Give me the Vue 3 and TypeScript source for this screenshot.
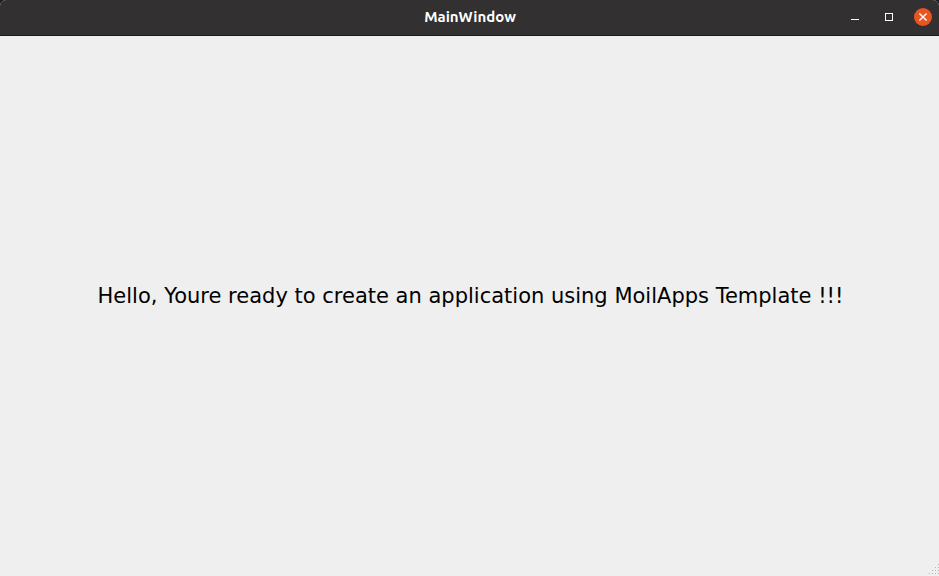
<script setup lang="ts">
const title: string = 'MainWindow'
const message: string = 'Hello, Youre ready to create an application using MoilApps Template !!!'

interface Dot {
  x: number
  y: number
}

// Triangular dot pattern of the resize grip, one more dot per row.
const gripDots: Dot[] = []
for (let row = 0; row < 4; row++) {
  for (let col = 3 - row; col < 4; col++) {
    gripDots.push({ x: 1 + col * 3, y: row * 3 })
  }
}
</script>

<template>
  <div class="window">
    <header class="titlebar">
      <h1 class="title">{{ title }}</h1>
      <div class="controls">
        <button class="control" type="button" aria-label="Minimize">
          <svg width="18" height="18" viewBox="0 0 18 18" aria-hidden="true">
            <rect x="5" y="11" width="8" height="1" fill="#fff" />
          </svg>
        </button>
        <button class="control" type="button" aria-label="Maximize">
          <svg width="18" height="18" viewBox="0 0 18 18" aria-hidden="true">
            <rect x="5.5" y="5.5" width="7" height="7" fill="none" stroke="#fff" />
          </svg>
        </button>
        <button class="control close" type="button" aria-label="Close">
          <svg width="18" height="18" viewBox="0 0 18 18" aria-hidden="true">
            <path d="M5.4 5.4 L12.6 12.6 M12.6 5.4 L5.4 12.6" stroke="#fff" stroke-width="1.4" fill="none" />
          </svg>
        </button>
      </div>
    </header>
    <main class="content">
      <p class="message">{{ message }}</p>
    </main>
    <footer class="statusbar">
      <svg class="grip" width="11" height="12" viewBox="0 0 11 12" aria-hidden="true">
        <rect v-for="dot in gripDots" :key="`${dot.x}-${dot.y}`" :x="dot.x" :y="dot.y" width="1" height="1" />
      </svg>
    </footer>
  </div>
</template>

<style>
body {
  background: #1c1b1b;
}
</style>

<style scoped>
.window {
  display: flex;
  flex-direction: column;
  min-height: 100vh;
  overflow: hidden;
  border-radius: 6px 6px 0 0;
  background: #efefef;
}

.titlebar {
  display: grid;
  grid-template-columns: 1fr auto 1fr;
  align-items: center;
  box-sizing: border-box;
  height: 36px;
  padding: 0 7px 1px 8px;
  border-bottom: 1px solid #1b1a1a;
  background: #323030;
}

.title {
  grid-column: 2;
  margin: 0;
  color: #ffffff;
  font: bold 15px/20px Ubuntu, "Noto Sans", sans-serif;
}

.controls {
  display: flex;
  justify-content: flex-end;
  gap: 16px;
}

.control {
  width: 18px;
  height: 18px;
  padding: 0;
  border: 0;
  border-radius: 50%;
  background: transparent;
}

.control svg {
  display: block;
}

.close {
  background: #e95420;
}

.content {
  display: flex;
  flex: 1;
  align-items: center;
  justify-content: center;
  padding: 1px 0 0 2px;
}

.message {
  margin: 0;
  color: #000000;
  text-align: center;
  font: 21px/26px "DejaVu Sans", sans-serif;
}

.statusbar {
  display: flex;
  align-items: flex-start;
  justify-content: flex-end;
  height: 22px;
  padding-top: 10px;
  box-sizing: border-box;
}

.grip {
  fill: #b4b4b4;
}
</style>
